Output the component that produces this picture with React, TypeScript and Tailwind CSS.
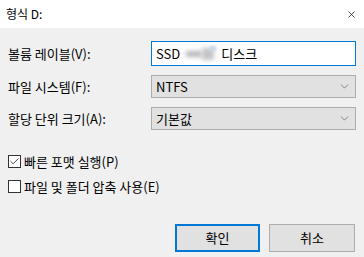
import { X, ChevronDown, Check } from 'lucide-react'

const font = 'font-["Noto_Sans_CJK_KR",sans-serif]'

function Select({ value }: { value: string }) {
  return (
    <div className="flex h-[23px] w-[205px] items-center justify-between border border-[#adadad] bg-[#e1e1e1] pl-[4px] pr-[4px]">
      <span className="text-[13px] leading-none text-black">{value}</span>
      <ChevronDown className="h-[13px] w-[13px] text-[#555]" strokeWidth={1.25} />
    </div>
  )
}

function Row({ label, children }: { label: string; children: React.ReactNode }) {
  return (
    <div className="flex items-center">
      <label className="w-[143px] text-[13px] leading-none text-black">{label}</label>
      {children}
    </div>
  )
}

function CheckRow({ label, checked }: { label: string; checked?: boolean }) {
  return (
    <div className="flex items-center gap-[3px]">
      <span className="flex h-[13px] w-[13px] items-center justify-center border border-[#333] bg-white">
        {checked && <Check className="h-[11px] w-[11px] text-[#333]" strokeWidth={2} />}
      </span>
      <span className="text-[13px] leading-none text-black">{label}</span>
    </div>
  )
}

export default function App() {
  return (
    <div className={`flex h-[257px] w-[364px] flex-col bg-[#f0f0f0] ${font}`}>
      <div className="flex h-[28px] items-center justify-between bg-white pl-[6px] pr-[7px]">
        <span className="text-[12px] leading-none text-black">형식 D:</span>
        <X className="h-[11px] w-[11px] text-black" strokeWidth={1.5} />
      </div>

      <div className="flex flex-col gap-[9px] px-[8px] pt-[13px]">
        <Row label="볼륨 레이블(V):">
          <div className="flex h-[25px] w-[205px] items-center border border-[#0078d7] bg-white pl-[4px]">
            <span className="text-[13px] leading-none text-black">SSD</span>
            <span className="relative mx-[4px] h-[16px] w-[33px]">
              <span className="absolute left-[2px] top-[5px] h-[6px] w-[16px] bg-[#b8b8bc] blur-[2px]" />
              <span className="absolute left-[18px] top-[2px] h-[12px] w-[12px] bg-[#c4c4c8] blur-[2px]" />
              <span className="absolute left-[26px] top-0 h-[5px] w-[6px] bg-[#c8d8ec] blur-[1px]" />
            </span>
            <span className="text-[13px] leading-none text-black">디스크</span>
          </div>
        </Row>
        <Row label="파일 시스템(F):">
          <Select value="NTFS" />
        </Row>
        <Row label="할당 단위 크기(A):">
          <Select value="기본값" />
        </Row>
      </div>

      <div className="flex flex-col gap-[12px] px-[8px] pt-[25px]">
        <CheckRow label="빠른 포맷 실행(P)" checked />
        <CheckRow label="파일 및 폴더 압축 사용(E)" />
      </div>

      <div className="flex justify-end gap-[9px] pr-[9px] pt-[31px]">
        <button className="h-[28px] w-[85px] border-2 border-[#0078d7] bg-[#e1e1e1] text-[13px] text-black">
          확인
        </button>
        <button className="h-[28px] w-[86px] border border-[#adadad] bg-[#e1e1e1] text-[13px] text-black">
          취소
        </button>
      </div>
    </div>
  )
}
